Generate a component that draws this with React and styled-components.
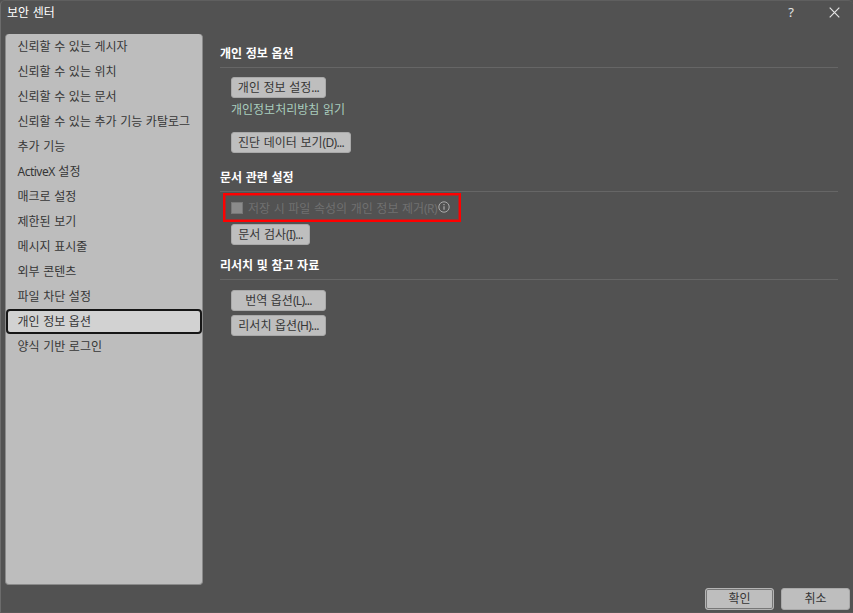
import React from "react";
import styled, { createGlobalStyle, css } from "styled-components";

const GlobalStyle = createGlobalStyle`
  *, *::before, *::after { box-sizing: border-box; }
  body { margin: 0; background: #525252; }
`;

const Dialog = styled.div`
  display: flex;
  flex-direction: column;
  width: 853px;
  height: 613px;
  overflow: hidden;
  background: #525252;
  border-left: 1px solid #6c6c6c;
  border-top: 1px solid #5f5f5f;
  border-bottom: 1px solid #5a5757;
  border-radius: 5px 5px 0 0;
  color: #fff;
  font: 12px/20px "Noto Sans CJK KR", sans-serif;
  word-spacing: 0.9px;
  white-space: nowrap;
`;

const TitleBar = styled.header`
  display: flex;
  align-items: center;
  height: 33px;
  padding: 0 13px 11px 6px;
`;

const Title = styled.h1`
  flex: 1;
  margin: 0;
  font-size: 12px;
  font-weight: 400;
`;

const WindowButton = styled.button`
  display: grid;
  place-items: center;
  width: 12px;
  height: 20px;
  margin-left: 31px;
  padding: 0;
  border: 0;
  background: none;
  color: #e4e4e4;
  font: 13px/20px "Noto Sans", sans-serif;
`;

const Body = styled.div`
  display: flex;
  height: 551px;
  padding-left: 4px;
`;

const Sidebar = styled.nav`
  width: 198px;
  height: 551px;
  background: #bdbdbd;
  border: 1px solid #8a8a8a;
  border-top: 0;
  border-radius: 4px;
`;

const NavItem = styled.div`
  height: 25px;
  padding-left: 11.5px;
  color: #363636;
  line-height: 23px;
  ${({ $selected }) =>
    $selected &&
    css`
      padding-left: 9.5px;
      border: 2px solid #161616;
      border-radius: 4px;
      background: #d2d2d2;
      line-height: 19px;
    `}
`;

const Latin = styled.span`
  font-family: "Noto Sans", sans-serif;
  letter-spacing: ${({ $tight }) => $tight || 0}px;
`;

const Content = styled.main`
  width: 618px;
  margin-left: 17px;
  padding-top: 8px;
`;

const Section = styled.section`
  height: ${({ $height }) => $height}px;
`;

const Heading = styled.h2`
  height: 26px;
  margin: 0;
  border-bottom: 1px solid #666;
  font-size: 12px;
  font-weight: 700;
  line-height: 22px;
`;

const Options = styled.div`
  display: flex;
  flex-direction: column;
  align-items: flex-start;
  padding: ${({ $top }) => $top}px 0 0 11px;
`;

const Button = styled.button`
  width: ${({ $width }) => $width}px;
  height: ${({ $tall }) => ($tall ? 22 : 21)}px;
  margin: 0 0 ${({ $gap }) => $gap || 0}px;
  padding: 0 0 ${({ $tall }) => ($tall ? 2 : 1)}px;
  border: 1px solid #a9a9a9;
  border-radius: 3px;
  background: #bebebe;
  color: #363636;
  font: inherit;
  line-height: 18px;
  word-spacing: inherit;
  text-align: center;
  ${({ $primary }) =>
    $primary &&
    css`
      border-color: #b4b4b4;
      box-shadow: inset 0 0 0 1px #777;
    `}
`;

const PolicyLink = styled.a`
  height: 34px;
  line-height: 22px;
  color: #a9cdbd;
`;

const Highlight = styled.div`
  display: flex;
  align-items: center;
  width: 238px;
  height: 29px;
  margin: 0 0 2px -8px;
  padding: 1px 0 0 6px;
  border: 2px solid #ff0000;
  box-shadow: inset 0 0 0 1px rgba(255, 0, 0, 0.45);
  color: #707070;
`;

const Checkbox = styled.span`
  width: 12px;
  height: 12px;
  margin-right: 5px;
  border: 1px solid #777;
  background: #8b8b8b;
`;

const InfoIcon = styled.svg`
  width: 12px;
  height: 12px;
  margin: -3px 0 0 1px;
`;

const Footer = styled.footer`
  display: flex;
  justify-content: flex-end;
  gap: 7px;
  padding: 3px 3px 0 0;
`;

const PAGES = [
  "신뢰할 수 있는 게시자",
  "신뢰할 수 있는 위치",
  "신뢰할 수 있는 문서",
  "신뢰할 수 있는 추가 기능 카탈로그",
  "추가 기능",
  <><Latin $tight={-0.5}>ActiveX</Latin> 설정</>,
  "매크로 설정",
  "제한된 보기",
  "메시지 표시줄",
  "외부 콘텐츠",
  "파일 차단 설정",
  "개인 정보 옵션",
  "양식 기반 로그인",
];

const SELECTED = 11;

export default function App() {
  return (
    <>
      <GlobalStyle />
      <Dialog>
        <TitleBar>
          <Title>보안 센터</Title>
          <WindowButton>?</WindowButton>
          <WindowButton>
            <svg width="11" height="11" viewBox="0 0 11 11" stroke="currentColor" strokeWidth="1.2">
              <path d="M.7.7 10.3 10.3M10.3.7.7 10.3" />
            </svg>
          </WindowButton>
        </TitleBar>
        <Body>
          <Sidebar>
            {PAGES.map((label, i) => (
              <NavItem key={i} $selected={i === SELECTED}>{label}</NavItem>
            ))}
          </Sidebar>
          <Content>
            <Section $height={124}>
              <Heading>개인 정보 옵션</Heading>
              <Options $top={9}>
                <Button $width={95}>개인 정보 설정<Latin $tight={-0.6}>...</Latin></Button>
                <PolicyLink>개인정보처리방침 읽기</PolicyLink>
                <Button $width={120}>진단 데이터 보기<Latin $tight={-0.7}>(D)...</Latin></Button>
              </Options>
            </Section>
            <Section $height={88}>
              <Heading>문서 관련 설정</Heading>
              <Options $top={1}>
                <Highlight>
                  <Checkbox />
                  <span>저장 시 파일 속성의 개인 정보 제거<Latin $tight={-0.6}>(R)</Latin></span>
                  <InfoIcon viewBox="0 0 12 12" fill="none" stroke="#b4b4b4">
                    <circle cx="6" cy="6" r="5.2" strokeWidth=".9" />
                    <path d="M6 5.2v3.6M6 3v1.2" strokeWidth="1.1" />
                  </InfoIcon>
                </Highlight>
                <Button $width={79}>문서 검사<Latin $tight={-0.7}>(I)...</Latin></Button>
              </Options>
            </Section>
            <Section $height={100}>
              <Heading>리서치 및 참고 자료</Heading>
              <Options $top={10}>
                <Button $width={95} $gap={4}>번역 옵션<Latin $tight={-0.7}>(L)...</Latin></Button>
                <Button $width={95}>리서치 옵션<Latin $tight={-0.7}>(H)...</Latin></Button>
              </Options>
            </Section>
          </Content>
        </Body>
        <Footer>
          <Button $width={69} $tall $primary>확인</Button>
          <Button $width={69} $tall>취소</Button>
        </Footer>
      </Dialog>
    </>
  );
}
